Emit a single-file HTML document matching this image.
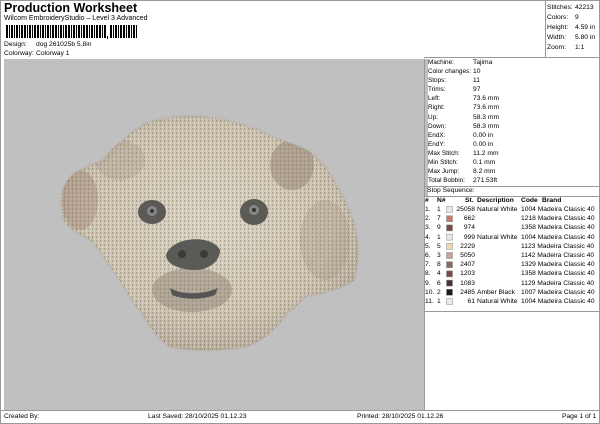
<!DOCTYPE html>
<html><head><meta charset="utf-8"><style>
*{margin:0;padding:0;box-sizing:border-box}
body{width:600px;height:424px;background:#fff;font-family:"Liberation Sans",sans-serif;color:#000;position:relative;overflow:hidden;font-size:6.7px}
.a{position:absolute;white-space:nowrap}
</style></head><body>
<div class="a" style="left:0;top:0;width:600px;height:424px;border:1px solid #999"></div>
<div class="a" style="left:4px;top:1px;font-size:12.5px;font-weight:bold">Production Worksheet</div>
<div class="a" style="left:4px;top:15px;font-size:7px">Wilcom EmbroideryStudio – Level 3 Advanced</div>
<svg class="a" style="left:6px;top:25px" width="135" height="15">
<g fill="#000">
<rect x="0" y="0" width="2" height="13"/><rect x="3" y="0" width="1" height="13"/><rect x="5" y="0" width="2" height="13"/><rect x="8" y="0" width="1" height="13"/><rect x="10" y="0" width="2" height="13"/><rect x="13" y="0" width="1" height="13"/><rect x="15" y="0" width="2" height="13"/><rect x="18" y="0" width="2" height="13"/><rect x="21" y="0" width="1" height="13"/><rect x="23" y="0" width="2" height="13"/><rect x="26" y="0" width="1" height="13"/><rect x="28" y="0" width="2" height="13"/><rect x="31" y="0" width="2" height="13"/><rect x="34" y="0" width="1" height="13"/><rect x="36" y="0" width="2" height="13"/><rect x="39" y="0" width="1" height="13"/><rect x="41" y="0" width="2" height="13"/><rect x="44" y="0" width="1" height="13"/><rect x="46" y="0" width="2" height="13"/><rect x="49" y="0" width="2" height="13"/><rect x="52" y="0" width="1" height="13"/><rect x="54" y="0" width="2" height="13"/><rect x="57" y="0" width="1" height="13"/><rect x="59" y="0" width="2" height="13"/><rect x="62" y="0" width="2" height="13"/><rect x="65" y="0" width="1" height="13"/><rect x="67" y="0" width="2" height="13"/><rect x="70" y="0" width="1" height="13"/><rect x="72" y="0" width="2" height="13"/><rect x="75" y="0" width="1" height="13"/><rect x="77" y="0" width="2" height="13"/><rect x="80" y="0" width="2" height="13"/><rect x="83" y="0" width="1" height="13"/><rect x="85" y="0" width="2" height="13"/><rect x="88" y="0" width="1" height="13"/><rect x="90" y="0" width="2" height="13"/><rect x="93" y="0" width="2" height="13"/><rect x="96" y="0" width="1" height="13"/><rect x="98" y="0" width="2" height="13"/>
<rect x="101" y="11" width="1" height="3"/>
<rect x="104" y="0" width="2" height="13"/><rect x="107" y="0" width="1" height="13"/><rect x="109" y="0" width="2" height="13"/><rect x="112" y="0" width="1" height="13"/><rect x="114" y="0" width="2" height="13"/><rect x="117" y="0" width="2" height="13"/><rect x="120" y="0" width="1" height="13"/><rect x="122" y="0" width="2" height="13"/><rect x="125" y="0" width="1" height="13"/><rect x="127" y="0" width="2" height="13"/><rect x="130" y="0" width="1" height="13"/>
</g></svg>
<div class="a" style="left:4px;top:41px">Design:</div><div class="a" style="left:36px;top:41px">dog 261025b 5,8in</div>
<div class="a" style="left:4px;top:50px">Colorway:</div><div class="a" style="left:36px;top:50px">Colorway 1</div>
<div class="a" style="left:545px;top:0;width:1px;height:58px;background:#999"></div>
<div class="a" style="left:424px;top:57px;width:176px;height:1px;background:#999"></div>
<div class="a" style="left:547px;top:3px;line-height:10px">Stitches:<br>Colors:<br>Height:<br>Width:<br>Zoom:</div>
<div class="a" style="left:575px;top:3px;line-height:10px">42213<br>9<br>4.59 in<br>5.80 in<br>1:1</div>
<div class="a" style="left:4px;top:59px;width:420px;height:351px;background:#c0c0c0"></div>
<div class="a" style="left:424px;top:59px;width:4px;height:138px;background:#c0c0c0"></div>
<svg class="a" style="left:0;top:0" width="424" height="410">
<defs>
<radialGradient id="g" cx="50%" cy="45%" r="60%"><stop offset="0" stop-color="#d8d2c0"/><stop offset=".7" stop-color="#cac0ae"/><stop offset="1" stop-color="#b0a596"/></radialGradient>
<pattern id="p" width="4" height="4" patternUnits="userSpaceOnUse"><rect x="0" y="0" width="1" height="2" fill="#7f6e5c" opacity=".45"/><rect x="2" y="2" width="1" height="2" fill="#f2ede0" opacity=".5"/></pattern>
<path id="d" d="M147 123 C170 116 195 115 211 118 C240 122 260 130 271 137 C290 143 305 148 311 153 C325 165 333 178 337 187 C348 205 355 222 357 240 C358 255 357 270 354 280 C340 290 320 293 304 297 C298 305 292 309 287 313 C275 330 260 343 244 347 C220 351 190 351 171 347 C160 340 155 333 151 327 C140 310 130 298 124 287 C110 265 100 250 91 240 C78 233 68 228 64 220 C60 205 62 195 64 187 C68 178 74 173 81 170 C90 165 98 162 104 160 C110 150 116 145 124 140 C132 132 140 126 147 123Z"/>
<clipPath id="c"><use href="#d"/></clipPath>
</defs>
<use href="#d" fill="url(#g)" stroke="#a89c8c" stroke-width="3" stroke-dasharray="1 2" stroke-opacity=".7"/>
<g clip-path="url(#c)">
<rect x="0" y="0" width="424" height="410" fill="url(#p)"/>
<ellipse cx="292" cy="165" rx="22" ry="25" fill="#8d7a6a" opacity=".45"/>
<ellipse cx="325" cy="240" rx="25" ry="40" fill="#9a8878" opacity=".25"/>
<ellipse cx="80" cy="200" rx="18" ry="30" fill="#9a7868" opacity=".35"/>
<ellipse cx="120" cy="160" rx="25" ry="20" fill="#9a8878" opacity=".25"/>
<ellipse cx="192" cy="290" rx="40" ry="22" fill="#8c8070" opacity=".45"/>
</g>
<ellipse cx="152" cy="212" rx="14" ry="12" fill="#5c5a56"/><circle cx="152" cy="211" r="5" fill="#888"/><circle cx="152" cy="211" r="2" fill="#333"/>
<ellipse cx="254" cy="212" rx="14" ry="13" fill="#5c5a56"/><circle cx="254" cy="210" r="5" fill="#888"/><circle cx="254" cy="210" r="2" fill="#333"/>
<path d="M166 255 C172 236 212 234 220 250 C220 262 208 270 195 270 C180 270 166 264 166 255Z" fill="#5a5a57"/>
<circle cx="182" cy="254" r="4" fill="#3a3a38"/><circle cx="204" cy="254" r="4" fill="#3a3a38"/>
<path d="M170 288 C182 295 202 295 218 288 L215 295 C202 300 184 300 172 295Z" fill="#555"/>
</svg>
<div class="a" style="left:428px;top:58px;line-height:9.1px;font-size:6.4px">Machine:<br>Color changes:<br>Stops:<br>Trims:<br>Left:<br>Right:<br>Up:<br>Down:<br>EndX:<br>EndY:<br>Max Stitch:<br>Min Stitch:<br>Max Jump:<br>Total Bobbin:</div>
<div class="a" style="left:473px;top:58px;line-height:9.1px">Tajima<br>10<br>11<br>97<br>73.6 mm<br>73.6 mm<br>58.3 mm<br>58.3 mm<br>0.00 in<br>0.00 in<br>11.2 mm<br>0.1 mm<br>8.2 mm<br>271.53ft</div>
<div class="a" style="left:424px;top:186px;width:176px;height:1px;background:#999"></div>
<div class="a" style="left:424px;top:196px;width:176px;height:1px;background:#999"></div>
<div class="a" style="left:424px;top:59px;width:1px;height:351px;background:#999"></div>
<div class="a" style="left:427px;top:187px">Stop Sequence:</div>
<div class="a" style="left:425px;top:196px;line-height:10px;font-weight:bold;text-decoration:underline">
<span class="a" style="left:0">#</span><span class="a" style="left:12px">N#</span><span class="a" style="left:40px">St.</span><span class="a" style="left:52px">Description</span><span class="a" style="left:96px">Code</span><span class="a" style="left:117px">Brand</span></div>
<div class="a" style="left:425px;top:205px;line-height:9.2px">1.<br>2.<br>3.<br>4.<br>5.<br>6.<br>7.<br>8.<br>9.<br>10.<br>11.</div>
<div class="a" style="left:437px;top:205px;line-height:9.2px">1<br>7<br>9<br>1<br>5<br>3<br>8<br>4<br>6<br>2<br>1</div>
<div class="a" style="left:450px;top:205px;line-height:9.2px;text-align:right;width:25px">25058<br>662<br>974<br>999<br>2229<br>5050<br>2407<br>1203<br>1083<br>2485<br>61</div>
<div class="a" style="left:477px;top:205px;line-height:9.2px">Natural White<br><br><br>Natural White<br><br><br><br><br><br>Amber Black<br>Natural White</div>
<div class="a" style="left:521px;top:205px;line-height:9.2px">1004 Madeira Classic 40<br>1218 Madeira Classic 40<br>1358 Madeira Classic 40<br>1004 Madeira Classic 40<br>1123 Madeira Classic 40<br>1142 Madeira Classic 40<br>1329 Madeira Classic 40<br>1358 Madeira Classic 40<br>1129 Madeira Classic 40<br>1007 Madeira Classic 40<br>1004 Madeira Classic 40</div>
<svg class="a" style="left:446px;top:206px" width="8" height="102">
<g stroke="#888" stroke-width=".5">
<rect x=".5" y=".5" width="6" height="6" fill="#e8e8ea"/>
<rect x=".5" y="9.7" width="6" height="6" fill="#c07a6e"/>
<rect x=".5" y="18.9" width="6" height="6" fill="#7a4a48"/>
<rect x=".5" y="28.1" width="6" height="6" fill="#e8e8ea"/>
<rect x=".5" y="37.3" width="6" height="6" fill="#ecd9b0"/>
<rect x=".5" y="46.5" width="6" height="6" fill="#c9a09a"/>
<rect x=".5" y="55.7" width="6" height="6" fill="#8a6a60"/>
<rect x=".5" y="64.9" width="6" height="6" fill="#7a4a4a"/>
<rect x=".5" y="74.1" width="6" height="6" fill="#4a3030"/>
<rect x=".5" y="83.3" width="6" height="6" fill="#1a1a1a"/>
<rect x=".5" y="92.5" width="6" height="6" fill="#e8e8ea"/>
</g></svg>
<div class="a" style="left:424px;top:311px;width:176px;height:1px;background:#999"></div>
<div class="a" style="left:0;top:410px;width:600px;height:1px;background:#999"></div>
<div class="a" style="left:4px;top:413px">Created By:</div>
<div class="a" style="left:148px;top:413px">Last Saved: 28/10/2025 01.12.23</div>
<div class="a" style="left:357px;top:413px">Printed: 28/10/2025 01.12.26</div>
<div class="a" style="left:562px;top:413px">Page 1 of 1</div>
</body></html>
